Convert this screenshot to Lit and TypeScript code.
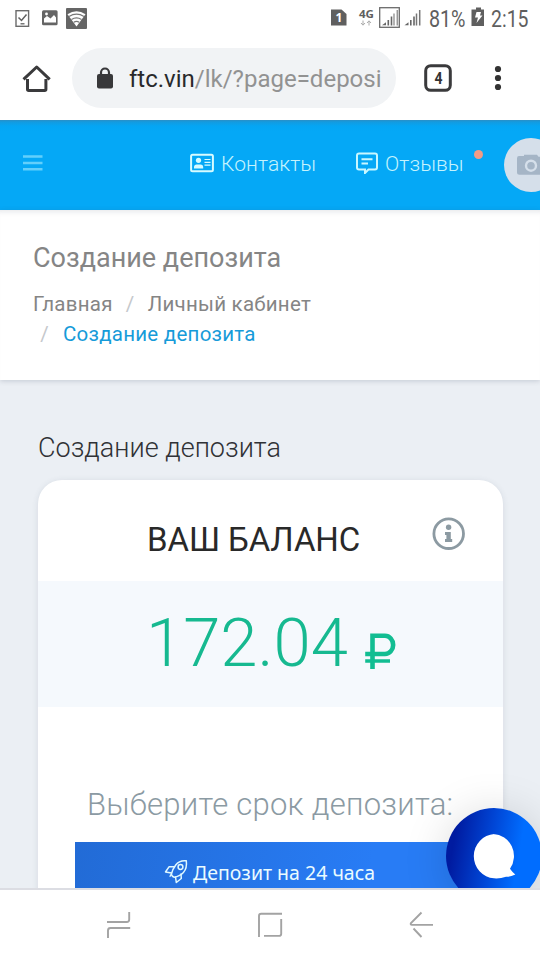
import { LitElement, html, css, svg } from "lit";
import { customElement } from "lit/decorators.js";

@customElement("status-bar")
class StatusBar extends LitElement {
  static styles = css`
    :host { display: flex; height: 36px; flex: none; color: #5f5f5f; align-items: flex-start; }
    svg { display: block; flex: none; }
    .left { margin-left: 14px; }
    .right { margin-left: auto; }
    .value { font: 400 24px/36px Roboto, sans-serif; height: 36px; white-space: nowrap; }
    .squeeze { display: block; transform-origin: 0 50%; transform: scaleX(0.82); margin-top: 1px; }
    .percent { width: 36px; margin-left: 7px; }
    .clock { width: 37px; margin: 0 12px 0 6px; }
    .battery { margin-left: 6px; }
    .clock .squeeze { transform: scaleX(0.81); }
    text { font-family: "Open Sans", sans-serif; font-weight: 700; }
  `;
  render() {
    return html`
      <svg class="left" width="76" height="36" viewBox="14 0 76 36">
        <rect x="16" y="10.700" width="12.600" height="15.600" fill="none" stroke="#6b6b6b" stroke-width="1.400" />
        <path d="M18.500 17.500l3 3 5-6" fill="none" stroke="#606060" stroke-width="1.500" />
        <path d="M20.500 23.800h4" stroke="#606060" stroke-width="1.300" />
        <rect x="42" y="10.300" width="15.600" height="15" rx="1.500" fill="#656565" />
        <path d="M44 22.500v-4l3-2.500 3.500 2.500 3.500-3.600 2 2.600v5z" fill="#fff" />
        <circle cx="46.500" cy="14" r="1.400" fill="#fff" />
        <rect x="66" y="8" width="21" height="21" rx="1" fill="#656565" />
        <path d="M67.500 14.200q9-6 18 0L76.500 26.500z" fill="#fff" />
        <path d="M69 16.400q7.500-4.500 15 0M71.500 19.400q5-3.200 10 0M73.800 22.300q2.700-1.800 5.400 0" fill="none" stroke="#777" stroke-width="1.200" />
      </svg>
      <svg class="right" width="92" height="36" viewBox="330 0 92 36">
        <path d="M331 9.500h10.500l5 4.500v11.500h-15.500z" fill="#5f5f5f" />
        <text x="339" y="22" font-size="12" text-anchor="middle" fill="#fff">1</text>
        <text x="359" y="17.500" font-size="10.500" textLength="15" lengthAdjust="spacingAndGlyphs" fill="#5f5f5f">4G</text>
        <path d="M363 20.500v4.500m-2-2l2 2.200 2-2.200M369 25.500v-4.500m-2 2l2-2.200 2 2.200" stroke="#aaa" fill="none" />
        <rect x="379.700" y="7.700" width="19.600" height="19.600" fill="none" stroke="#6b6b6b" stroke-width="1.300" />
        ${[0, 22.5].map((x) => svg`<g transform="translate(${x} 0)" stroke="#666" stroke-width="1.600">
          <path d="M382 25.300h4v-3z" fill="#666" stroke="none" />
          <path d="M388.300 25.500v-5.500M391.500 25.500v-9" />
          <path d="M394 25.500v-12M397.200 25.500v-15.500" stroke="#777" stroke-width="${x ? 1.5 : 1.1}" />
        </g>`)}
      </svg>
      <div class="value percent"><span class="squeeze">81%</span></div>
      <svg class="battery" width="14" height="36" viewBox="471 0 14 36">
        <path d="M476 7.500h5v2h3v16.500h-12.500v-16.500h4.500z" fill="#5f5f5f" />
        <path d="M476.500 12h4.500l-1 3.500h2.500l-6 7.500 1.500-5.500h-3z" fill="#fff" />
      </svg>
      <div class="value clock"><span class="squeeze">2:15</span></div>
    `;
  }
}

@customElement("browser-bar")
class BrowserBar extends LitElement {
  static styles = css`
    :host { display: flex; height: 84px; flex: none; align-items: center; }
    svg { display: block; flex: none; }
    .home { margin: 0 20px 0 20px; }
    .address { width: 324px; height: 60px; border-radius: 30px; background: #f1f3f5; display: flex; align-items: center; flex: none; }
    .lock { margin: 0 14px 0 23px; }
    .url { font: 400 24px/60px Roboto, sans-serif; color: #929292; white-space: nowrap; padding-top: 2px; }
    .host { color: #29292b; }
    .tabs { margin: 0 40px 0 28px; }
    text { font-family: Roboto, sans-serif; font-weight: 700; }
  `;
  render() {
    return html`
      <svg class="home" width="32" height="32" viewBox="20 62 32 32" fill="none" stroke="#3a3a3c" stroke-width="3">
        <path d="M27.500 79v10.300q0 1.200 1.200 1.200h16q1.200 0 1.200-1.200V79M23.500 79.300L36.700 67l13 12.300" stroke-linejoin="round" />
      </svg>
      <div class="address">
        <svg class="lock" width="20" height="26" viewBox="95 64 20 26">
          <rect x="97" y="73" width="16" height="14.500" rx="2" fill="#38383a" />
          <path d="M101 74v-2.500a4 4 0 0 1 8 0v2.500" fill="none" stroke="#38383a" stroke-width="2.200" />
        </svg>
        <div class="url"><span class="host">ftc.vin</span>/lk/?page=deposi</div>
      </div>
      <svg class="tabs" width="28" height="28" viewBox="424 64 28 28">
        <rect x="425.700" y="65.700" width="24.600" height="24.600" rx="5" fill="none" stroke="#3a3a3c" stroke-width="3" />
        <text x="438.500" y="83.700" font-size="17" text-anchor="middle" textLength="8" lengthAdjust="spacingAndGlyphs" fill="#333">4</text>
      </svg>
      <svg width="12" height="28" viewBox="492 64 12 28" fill="#333">
        <circle cx="498" cy="69" r="3.100" /><circle cx="498" cy="78" r="3.100" /><circle cx="498" cy="87" r="3.100" />
      </svg>
    `;
  }
}

@customElement("site-header")
class SiteHeader extends LitElement {
  static styles = css`
    :host { display: flex; height: 90px; flex: none; overflow: hidden; align-items: center; color: #c4f3fd;
      background: linear-gradient(#2b8fc6 0, #139be0 2px, #05a5f3 6px, #05a8f6 12px); }
    svg { display: block; flex: none; }
    .menu { margin: 0 147px 5px 23px; }
    .label { font: 300 21px/30px Roboto, sans-serif; white-space: nowrap; flex: none; }
    .contacts { width: 135px; margin-left: 7px; letter-spacing: 0.1px; }
    .reviews { width: 89px; margin-left: 7px; letter-spacing: 0.1px; }
    .label, .icon { position: relative; top: -1px; }
    .icon { top: -2px; }
    .dot { width: 9px; height: 9px; border-radius: 50%; background: #f29b86; margin: 0 21px 21px 0; flex: none; }
    .avatar { width: 54px; height: 54px; border-radius: 50%; background: #d5dfea; flex: none; display: flex; align-items: center; }
    .avatar svg { margin-left: 12px; }
  `;
  render() {
    return html`
      <svg class="menu" width="20" height="18" viewBox="0 0 20 18"><path d="M0 2.500h19.500M0 9h19.500M0 15.300h19.500" stroke="#63cffb" stroke-width="2.500" /></svg>
      <svg class="icon" width="24" height="20" viewBox="190 153 24 20">
        <rect x="191.100" y="154.800" width="21.800" height="16.400" rx="1.500" fill="none" stroke="#d7fbff" stroke-width="2" />
        <circle cx="198.500" cy="160.300" r="2.600" fill="#d7fbff" />
        <path d="M194 168.500v-1.300q0-2.700 2.700-2.700h3.800q2.700 0 2.700 2.700v1.300z" fill="#d7fbff" />
        <path d="M204.500 159.500h6M204.500 162.300h6M204.500 165.200h6" stroke="#d7fbff" stroke-width="1.200" />
      </svg>
      <span class="label contacts">Контакты</span>
      <svg class="icon" width="22" height="22" viewBox="356 152 22 22" fill="none" stroke="#c9f7ff" stroke-width="2">
        <path d="M359 153.500h16q2 0 2 2v12q0 2-2 2h-6.500l-3.500 3.500v-3.500h-6q-2 0-2-2v-12q0-2 2-2z" />
        <path d="M361.500 159.300h11M361.500 163.500h6.500" />
      </svg>
      <span class="label reviews">Отзывы</span>
      <span class="dot"></span>
      <div class="avatar">
        <svg width="30" height="22" viewBox="516 154 30 22">
          <path d="M519 156h5v-1.300h13l1.500 2h5q2 0 2 2v14q0 2-2 2h-24q-2.500 0-2.500-2.500v-14q0-2.200 2-2.200z" fill="#a5b5c6" />
          <circle cx="531" cy="165.700" r="5" fill="none" stroke="#d5dfea" stroke-width="2.400" />
        </svg>
      </div>
    `;
  }
}

@customElement("page-title")
class PageTitle extends LitElement {
  static styles = css`
    :host { display: block; height: 170px; flex: none; box-sizing: border-box; padding: 32px 33px 0; background: #fff; position: relative; z-index: 1;
      font-family: Roboto, sans-serif; color: #858585;
      box-shadow: 0 1px 5px rgba(60, 75, 95, 0.22), inset 0 6px 5px -4px rgba(60, 75, 95, 0.12); }
    .title { font-size: 27px; line-height: 32px; }
    .crumbs { margin-top: 15px; font-size: 20.5px; line-height: 30px; letter-spacing: 0.25px; }
    .row { display: flex; }
    .sep { width: 35px; text-align: center; color: #c5c8cc; }
    .row:last-child .sep { width: 23px; margin-right: 7px; }
    .current { color: #169bd9; }
  `;
  render() {
    return html`
      <div class="title">Создание депозита</div>
      <div class="crumbs">
        <div class="row"><span>Главная</span><span class="sep">/</span><span>Личный кабинет</span></div>
        <div class="row"><span class="sep">/</span><span class="current">Создание депозита</span></div>
      </div>
    `;
  }
}

@customElement("balance-card")
class BalanceCard extends LitElement {
  static styles = css`
    :host { display: block; width: 465px; height: 440px; border-radius: 24px 24px 0 0; background: #fff; box-shadow: 0 1px 6px rgba(60, 75, 95, 0.12); font-family: Roboto, sans-serif; }
    svg { display: block; flex: none; }
    .head { height: 101px; display: flex; box-sizing: border-box; padding-left: 109px; }
    .name { font-size: 33px; line-height: 40px; margin-top: 40px; color: #292929; width: 285px; white-space: nowrap; letter-spacing: -0.1px; }
    .info { margin-top: 37px; }
    .amount { height: 126px; background: #f5f9fd; display: flex; color: #16b990; }
    .sum { font-weight: 300; font-size: 67px; line-height: 80px; margin: 22px 0 0 108px; width: 219px; white-space: nowrap; }
    .ruble { margin-top: 51px; }
    .term { font-weight: 300; font-size: 31px; line-height: 40px; margin: 78px 0 0 49px; color: #8b9aa3; white-space: nowrap; letter-spacing: 0.24px; }
    .choice { height: 60px; margin: 17px 37px 0; display: flex; color: #e9fbff; background: linear-gradient(100deg, #226bd6, #287cf5 75%);
      font: 400 19.5px/62px "Noto Sans", "Open Sans", sans-serif; box-sizing: border-box; padding-left: 89px; white-space: nowrap; }
    .rocket { margin: 17px 4px 0 0; }
  `;
  render() {
    return html`
      <div class="head">
        <div class="name">ВАШ БАЛАНС</div>
        <svg class="info" width="34" height="34" viewBox="432 517 34 34">
          <circle cx="448.700" cy="533.700" r="14.800" fill="none" stroke="#8c9aa2" stroke-width="2.800" />
          <circle cx="448.600" cy="527.300" r="2.700" fill="#8c9aa2" />
          <path d="M445 532h5.800v7h1.400v3.100h-7.200v-3.100h1.400v-4h-1.400z" fill="#8c9aa2" />
        </svg>
      </div>
      <div class="amount">
        <div class="sum">172.04</div>
        <svg class="ruble" width="31" height="38" viewBox="365 632 31 38" fill="none" stroke="#12bd92" stroke-width="4.300">
          <path d="M372.500 669V635.800h12.500a7.800 8.700 0 0 1 0 18.200H365.200" stroke-width="4.600" />
          <path d="M365.200 661H390" stroke-width="3.500" />
        </svg>
      </div>
      <div class="term">Выберите срок депозита:</div>
      <div class="choice">
        <svg class="rocket" width="25" height="25" viewBox="0 0 25 25" fill="none" stroke="#dff8ff" stroke-width="1.500" stroke-linejoin="round" stroke-linecap="round">
          <path d="M22.300 1.800Q15.500 1 11.700 6 8 11 7.300 15.300q.7 2.300 2.900 2.900 5.300-.7 9.200-4.700Q23.300 9 22.300 1.800z" />
          <circle cx="16.500" cy="8" r="2.400" />
          <path d="M10.500 7.800H5L1.500 13l6 1M17 15l.3 4.500-5 4-.8-5.500M7.300 15.500l-1.200 1.600" />
        </svg>
        <span>Депозит на 24 часа</span>
      </div>
    `;
  }
}

@customElement("system-nav")
class SystemNav extends LitElement {
  static styles = css`
    :host { display: flex; height: 72px; flex: none; box-sizing: border-box; border-top: 2px solid #dcdde3; background: #fff; padding: 19px 106px 0; justify-content: space-between; position: relative; }
    svg { display: block; fill: none; stroke: #a3a3a3; stroke-width: 1.900; }
  `;
  render() {
    return html`
      <svg width="26" height="30" viewBox="106 909 26 30"><path d="M129.200 912v7.500q0 2.500-2.500 2.500H107M108 938v-7.500q0-2.500 2.500-2.500h19.700" /></svg>
      <svg width="26" height="30" viewBox="257 909 26 30"><path d="M259 937v-21q0-2.200 2.200-2.200H282M281.200 919v14.700q0 2.200-2.200 2.200h-15" /></svg>
      <svg width="26" height="30" viewBox="408 909 26 30"><path d="M421.500 912.500L411 923q-1 1.900 1 1.900h21M413.500 928.500l8 8.500" /></svg>
    `;
  }
}

@customElement("app-root")
class AppRoot extends LitElement {
  static styles = css`
    :host { display: flex; flex-direction: column; width: 540px; height: 960px; overflow: hidden; background: #fff; }
    .content { flex: 1; min-height: 0; background: #ebeff4; position: relative; overflow: hidden; box-sizing: border-box; padding: 52px 37px 0 38px; }
    .heading { font: 300 27px/32px Roboto, sans-serif; color: #303236; margin-bottom: 16px; white-space: nowrap; }
    .chat { position: absolute; left: 446px; top: 428px; width: 96px; height: 96px; border-radius: 50%; box-shadow: 0 4px 45px rgba(0, 0, 0, 0.15);
      background: linear-gradient(100deg, #001ba0 12%, #0046d6 45%, #006dff 72%); }
    .chat svg { display: block; }
  `;
  render() {
    return html`
      <status-bar></status-bar>
      <browser-bar></browser-bar>
      <site-header></site-header>
      <page-title></page-title>
      <main class="content">
        <div class="heading">Создание депозита</div>
        <balance-card></balance-card>
        <div class="chat">
          <svg width="96" height="96" viewBox="446 808 96 96">
            <path d="M493.300 834a21.300 22 0 0 1 16.700 34.800q2 3 5.300 5.700-5 2.500-9.300 2.300-6 2-12 1.500a21.800 22.200 0 0 1 .3-44.300z" fill="#fff" />
          </svg>
        </div>
      </main>
      <system-nav></system-nav>
    `;
  }
}
